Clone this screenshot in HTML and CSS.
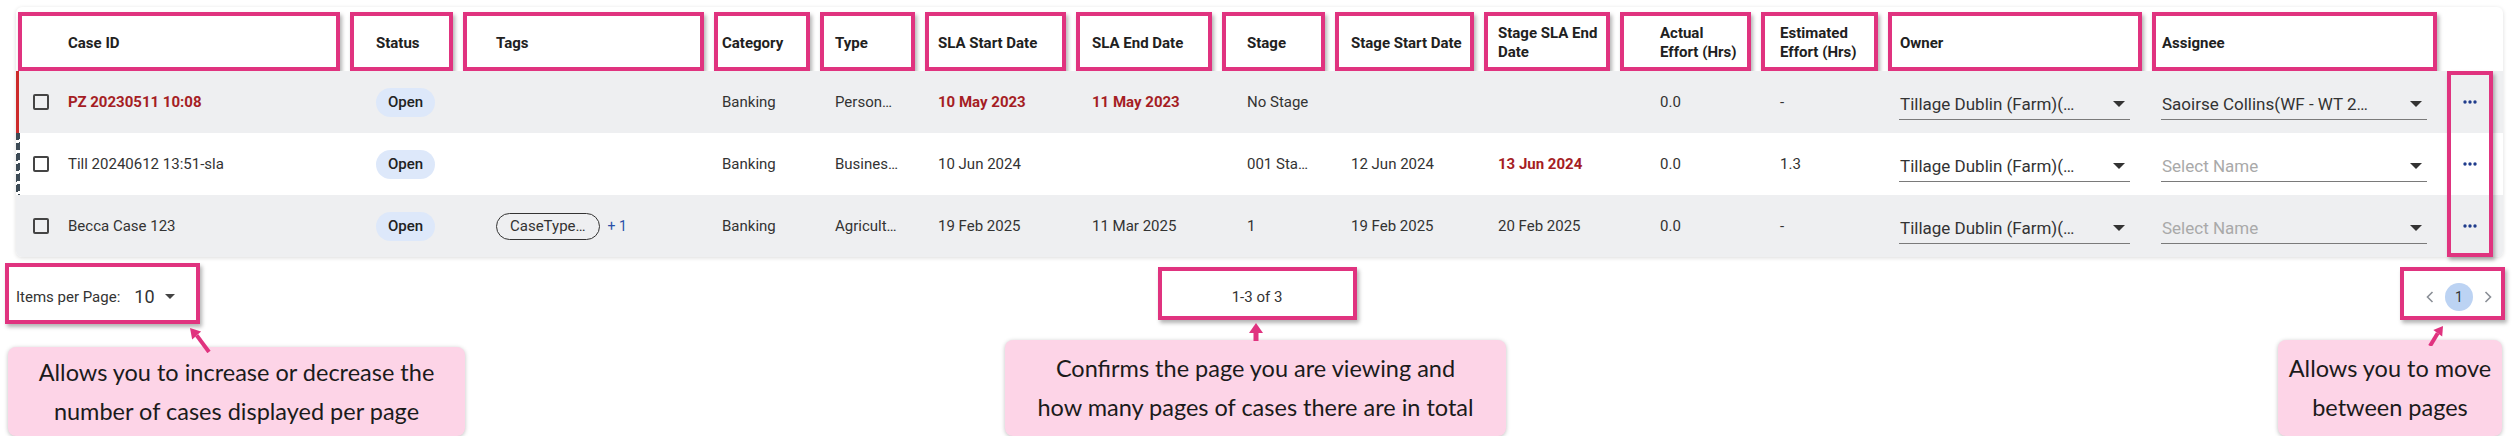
FILE: index.html
```html
<!DOCTYPE html>
<html lang="en">
<head>
<meta charset="UTF-8">
<title>Case List - Pagination</title>
<link rel="stylesheet" href="styles.css">
</head>
<body>
<div class="page">
    <div class="card">
        <div class="row head">
            <div>Case ID</div>
            <div>Status</div>
            <div>Tags</div>
            <div>Category</div>
            <div>Type</div>
            <div>SLA Start Date</div>
            <div>SLA End Date</div>
            <div>Stage</div>
            <div>Stage Start Date</div>
            <div>Stage SLA End<br>Date</div>
            <div>Actual<br>Effort (Hrs)</div>
            <div>Estimated<br>Effort (Hrs)</div>
            <div>Owner</div>
            <div>Assignee</div>
            <div></div>
        </div>
        <div class="rows">
            <div class="row shade overdue">
                <div><span class="check"></span><span class="late">PZ 20230511 10:08</span></div>
                <div><span class="status">Open</span></div>
                <div></div>
                <div>Banking</div>
                <div>Person…</div>
                <div><span class="late">10 May 2023</span></div>
                <div><span class="late">11 May 2023</span></div>
                <div>No Stage</div>
                <div></div>
                <div></div>
                <div>0.0</div>
                <div>-</div>
                <div><div class="select owner"><span>Tillage Dublin (Farm)(…</span><span class="caret"></span></div></div>
                <div><div class="select assignee"><span>Saoirse Collins(WF - WT 2…</span><span class="caret"></span></div></div>
                <div class="more"><svg width="14" height="4" viewBox="0 0 14 4"><circle cx="2" cy="2" r="1.7"/><circle cx="7" cy="2" r="1.7"/><circle cx="12" cy="2" r="1.7"/></svg></div>
            </div>
            <div class="row warn">
                <div><span class="check"></span>Till 20240612 13:51-sla</div>
                <div><span class="status">Open</span></div>
                <div></div>
                <div>Banking</div>
                <div>Busines…</div>
                <div>10 Jun 2024</div>
                <div></div>
                <div>001 Sta…</div>
                <div>12 Jun 2024</div>
                <div><span class="late">13 Jun 2024</span></div>
                <div>0.0</div>
                <div>1.3</div>
                <div><div class="select owner"><span>Tillage Dublin (Farm)(…</span><span class="caret"></span></div></div>
                <div><div class="select assignee empty"><span>Select Name</span><span class="caret"></span></div></div>
                <div class="more"><svg width="14" height="4" viewBox="0 0 14 4"><circle cx="2" cy="2" r="1.7"/><circle cx="7" cy="2" r="1.7"/><circle cx="12" cy="2" r="1.7"/></svg></div>
            </div>
            <div class="row shade last">
                <div><span class="check"></span>Becca Case 123</div>
                <div><span class="status">Open</span></div>
                <div><span class="tag">CaseType…</span><span class="more-tags">+ 1</span></div>
                <div>Banking</div>
                <div>Agricult…</div>
                <div>19 Feb 2025</div>
                <div>11 Mar 2025</div>
                <div>1</div>
                <div>19 Feb 2025</div>
                <div>20 Feb 2025</div>
                <div>0.0</div>
                <div>-</div>
                <div><div class="select owner"><span>Tillage Dublin (Farm)(…</span><span class="caret"></span></div></div>
                <div><div class="select assignee empty"><span>Select Name</span><span class="caret"></span></div></div>
                <div class="more"><svg width="14" height="4" viewBox="0 0 14 4"><circle cx="2" cy="2" r="1.7"/><circle cx="7" cy="2" r="1.7"/><circle cx="12" cy="2" r="1.7"/></svg></div>
            </div>
            <div class="more-mark"></div>
        </div>
    </div>

    <div class="foot">
        <div class="mark per-page">Items per Page: <span class="per-page-num">10</span><span class="caret small"></span></div>
        <div class="mark range">1-3 of 3</div>
        <div class="mark pager">
            <svg width="8" height="12" viewBox="0 0 8 12"><path d="M6.5 1 L1.5 6 L6.5 11" fill="none" stroke="#8a8f96" stroke-width="1.6"/></svg>
            <span class="page-num">1</span>
            <svg width="8" height="12" viewBox="0 0 8 12"><path d="M1.5 1 L6.5 6 L1.5 11" fill="none" stroke="#8a8f96" stroke-width="1.6"/></svg>
        </div>

        <div class="tip tip-left">
            <svg class="pointer p-left" width="34" height="30" viewBox="0 0 34 30"><line x1="14.7" y1="12.4" x2="27" y2="29" stroke="#e0337f" stroke-width="4"/><polygon points="8,5 10.2,16.5 19.1,8.5" fill="#e0337f"/></svg>
            Allows you to increase or decrease the<br>number of cases displayed per page
        </div>
        <div class="tip tip-mid">
            <svg class="pointer p-mid" width="16" height="18" viewBox="0 0 16 18"><polygon points="8,0 1,10 15,10" fill="#e0337f"/><rect x="5.5" y="9" width="5" height="9" fill="#e0337f"/></svg>
            Confirms the page you are viewing and<br>how many pages of cases there are in total
        </div>
        <div class="tip tip-right">
            <svg class="pointer p-right" width="24" height="26" viewBox="0 0 24 26"><line x1="11.7" y1="13.3" x2="4" y2="26" stroke="#e0337f" stroke-width="4"/><polygon points="17,6 7.3,10 16.2,16.5" fill="#e0337f"/></svg>
            Allows you to move<br>between pages
        </div>
    </div>
</div>
</body>
</html>
```

FILE: styles.css
```css
body {
    margin: 0;
    font-family: Roboto, 'Liberation Sans', sans-serif;
    color: #333;
    background: #fff;
}
.page {
    padding: 7px 10px 0 5px;
}

/* table card */
.card {
    margin: 0 2px 0 11px;
    background: #fff;
    border-radius: 6px;
    box-shadow: 0 1px 4px rgba(0,0,0,0.14);
}
.row {
    display: grid;
    grid-template-columns: 334px 113px 251px 106px 105px 151px 146px 113px 149px 136px 141px 127px 264px 295px 56px;
    height: 62px;
    align-items: center;
    font-size: 15px;
    position: relative;
}
.row > div {
    white-space: nowrap;
    display: flex;
    align-items: center;
}
.row > :nth-child(1) { padding-left: 17px; }
.row > :nth-child(2) { padding-left: 26px; }
.row > :nth-child(3) { padding-left: 33px; }
.row > :nth-child(4) { padding-left: 8px; }
.row > :nth-child(5) { padding-left: 15px; }
.row > :nth-child(6) { padding-left: 13px; }
.row > :nth-child(7) { padding-left: 16px; }
.row > :nth-child(8) { padding-left: 25px; }
.row > :nth-child(9) { padding-left: 16px; }
.row > :nth-child(10) { padding-left: 14px; }
.row > :nth-child(11) { padding-left: 40px; }
.row > :nth-child(12) { padding-left: 19px; }
.row > :nth-child(13) { padding-left: 12px; }
.row > :nth-child(14) { padding-left: 10px; }

.head {
    height: 64px;
    align-items: stretch;
}
.head > div {
    margin: 5px 10px 0 0;
    padding-top: 3px;
    font-weight: 700;
    line-height: 19px;
    color: #212121;
    box-shadow: inset 0 0 0 4px #e0337f, 2px 3px 4px rgba(0,0,0,0.3);
}
.head > :first-child {
    margin-left: 2px;
    padding-left: 50px;
}
.head > :last-child {
    box-shadow: none;
}

.rows {
    position: relative;
}
.shade {
    background: #eeeff1;
}
.last {
    border-radius: 0 0 6px 6px;
}
.overdue {
    box-shadow: inset 3px 0 0 #cc2a2a;
}
.warn::before {
    content: "";
    position: absolute;
    left: 0;
    top: 0;
    bottom: 0;
    width: 4px;
    background: repeating-linear-gradient(165deg, #3c4a55 0 7px, transparent 7px 10px);
}
.check {
    width: 12px;
    height: 12px;
    border: 2px solid #444;
    border-radius: 2px;
    margin-right: 19px;
    flex: none;
}
.late {
    color: #a51d24;
    font-weight: 700;
}
.status {
    background: #dde8fa;
    color: #222;
    font-weight: 500;
    border-radius: 15px;
    padding: 0 12px;
    line-height: 29px;
}
.tag {
    border: 1.5px solid #333;
    border-radius: 14px;
    padding: 0 13px;
    line-height: 25px;
}
.more-tags {
    margin-left: 8px;
    color: #2a4fa8;
    font-size: 14px;
}
.select {
    display: flex;
    align-items: center;
    justify-content: space-between;
    height: 30px;
    border-bottom: 1.5px solid #7a7a7a;
    font-size: 17px;
    color: #333;
    margin-top: 4px;
    margin-left: -1px;
    padding-left: 1px;
}
.owner { width: 230px; }
.assignee { width: 265px; }
.empty { color: #a9a9a9; }
.caret {
    width: 0;
    height: 0;
    border-left: 6px solid transparent;
    border-right: 6px solid transparent;
    border-top: 6px solid #333;
    margin-right: 5px;
}
.more {
    justify-content: center;
    padding-right: 10px;
}
.more svg {
    fill: #1f3c8c;
}
.more-mark {
    position: absolute;
    top: 0;
    bottom: 0;
    right: 10px;
    width: 46px;
    box-shadow: inset 0 0 0 4px #e0337f, 2px 3px 4px rgba(0,0,0,0.3);
}

/* footer controls */
.foot {
    display: grid;
    grid-template-columns: 1fr 501px 1fr;
    grid-template-rows: 61px auto;
    margin-top: 6px;
    font-size: 15px;
}
.mark {
    box-shadow: inset 0 0 0 4px #e0337f, 2px 3px 4px rgba(0,0,0,0.3);
    display: flex;
    align-items: center;
}
.per-page {
    justify-self: start;
    width: 195px;
    height: 61px;
    box-sizing: border-box;
    padding: 6px 0 0 11px;
    color: #333;
}
.per-page-num {
    font-size: 18px;
    margin-left: 14px;
}
.caret.small {
    border-left-width: 5px;
    border-right-width: 5px;
    border-top-width: 5px;
    border-top-color: #444;
    margin-left: 10px;
}
.range {
    justify-self: center;
    align-self: center;
    width: 199px;
    height: 53px;
    justify-content: center;
    padding-top: 6px;
    box-sizing: border-box;
    margin-left: 4px;
}
.pager {
    justify-self: end;
    align-self: center;
    width: 105px;
    height: 53px;
    box-sizing: border-box;
    padding: 6px 13px 0 0;
    justify-content: flex-end;
    gap: 11px;
}
.page-num {
    width: 28px;
    height: 28px;
    border-radius: 50%;
    background: #bcd3f3;
    color: #333;
    display: flex;
    align-items: center;
    justify-content: center;
    font-size: 14px;
}

/* annotation callouts */
.tip {
    position: relative;
    background: #fdd4e7;
    border-radius: 8px;
    box-shadow: 0 1px 4px rgba(0,0,0,0.25);
    font-family: Lato, 'Open Sans', sans-serif;
    font-size: 23.5px;
    line-height: 39px;
    color: #1b1b1b;
    text-align: center;
    display: flex;
    align-items: center;
    justify-content: center;
    box-sizing: border-box;
}
.tip-left {
    justify-self: start;
    margin: 23px 0 0 3px;
    width: 457px;
    height: 89px;
}
.tip-mid {
    justify-self: center;
    margin: 16px 0 0 1px;
    width: 501px;
    height: 96px;
}
.tip-right {
    justify-self: end;
    margin: 16px 3px 0 0;
    width: 224px;
    height: 96px;
}
.pointer {
    position: absolute;
}
.p-left { left: 174px; top: -24px; }
.p-mid { left: 243px; top: -17px; }
.p-right { left: 148px; top: -20px; }
```
